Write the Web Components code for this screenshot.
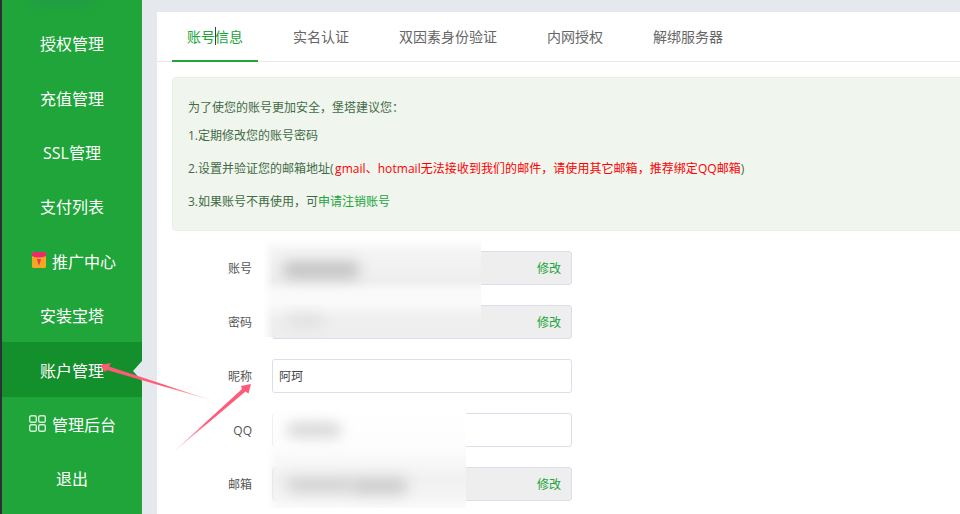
<!DOCTYPE html>
<html lang="zh">
<head>
<meta charset="utf-8">
<title>账户管理</title>
<style>
    html, body { margin: 0; height: 100%; overflow: hidden; background: #e5e8ed; }
    body { font-family: "Open Sans", "Noto Sans CJK SC", sans-serif; }
    svg { display: block; }
</style>
</head>
<body>
<app-shell>
    <side-menu slot="menu">
        <menu-item>授权管理</menu-item>
        <menu-item>充值管理</menu-item>
        <menu-item>SSL管理</menu-item>
        <menu-item>支付列表</menu-item>
        <menu-item shift="4">
            <svg slot="icon" width="14" height="16" viewBox="0 1 14 16" style="margin-top:-2px">
                <rect x="0" y="1" width="14" height="16" rx="1.5" fill="#f5a623"/>
                <path d="M0 2.500A1.500 1.500 0 0 1 1.500 1h11A1.500 1.500 0 0 1 14 2.500V5Q7 8 0 5z" fill="#ea2a6b"/>
                <path d="M5 8h4L8 12 7 14.500 6 12z" fill="#e8385f"/>
            </svg>
            推广中心
        </menu-item>
        <menu-item>安装宝塔</menu-item>
        <menu-item active>账户管理</menu-item>
        <menu-item shift="1">
            <svg slot="icon" width="17" height="17" viewBox="0 0 17 17" fill="none" stroke="#d8f0dc" stroke-width="1.4">
                <rect x="0.7" y="0.7" width="6.6" height="6.6" rx="1.6"/>
                <rect x="9.7" y="0.7" width="6.6" height="6.6" rx="1.6"/>
                <rect x="0.7" y="9.7" width="6.6" height="6.6" rx="1.6"/>
                <rect x="9.7" y="9.7" width="6.6" height="6.6" rx="1.6"/>
            </svg>
            管理后台
        </menu-item>
        <menu-item>退出</menu-item>
    </side-menu>

    <content-card>
        <tab-bar>
            <tab-item active>账号信息</tab-item>
            <tab-item>实名认证</tab-item>
            <tab-item>双因素身份验证</tab-item>
            <tab-item>内网授权</tab-item>
            <tab-item>解绑服务器</tab-item>
        </tab-bar>

        <notice-box>
            <p>为了使您的账号更加安全，堡塔建议您：</p>
            <p>1.定期修改您的账号密码</p>
            <p class="gap">2.设置并验证您的邮箱地址(<span class="red">gmail、hotmail无法接收到我们的邮件，请使用其它邮箱，推荐绑定QQ邮箱</span>)</p>
            <p class="gap">3.如果账号不再使用，可<span class="link">申请注销账号</span></p>
        </notice-box>

        <form-row label="账号" action="修改" disabled></form-row>
        <form-row label="密码" action="修改" disabled></form-row>
        <form-row label="昵称">阿珂</form-row>
        <form-row label="QQ"></form-row>
        <form-row label="邮箱" action="修改" disabled></form-row>
    </content-card>

    <mark-up></mark-up>
</app-shell>

<script>
class AppShell extends HTMLElement {
    constructor() {
        super();
        this.attachShadow({ mode: 'open' });
        this.shadowRoot.innerHTML = `
            <style>
                :host {
                    display: flex;
                    position: relative;
                    width: 960px;
                    height: 514px;
                    overflow: hidden;
                    background: #e5e8ed;
                }
            </style>
            <slot name="menu"></slot>
            <slot></slot>
        `;
    }
}

class SideMenu extends HTMLElement {
    constructor() {
        super();
        this.attachShadow({ mode: 'open' });
        this.shadowRoot.innerHTML = `
            <style>
                :host {
                    display: block;
                    flex: none;
                    box-sizing: border-box;
                    width: 142px;
                    height: 514px;
                    padding-top: 16px;
                    background: #20a53a;
                    border-left: 2px solid #2e2f36;
                }
            </style>
            <slot></slot>
        `;
    }
}

class MenuItem extends HTMLElement {
    constructor() {
        super();
        this.attachShadow({ mode: 'open' });
        this.shadowRoot.innerHTML = `
            <style>
                :host {
                    display: flex;
                    position: relative;
                    box-sizing: border-box;
                    align-items: center;
                    justify-content: center;
                    gap: 6px;
                    height: 54.4px;
                    color: #fff;
                    font-size: 16px;
                }
                :host([active]) { background: #138f2b; }
                :host([active])::after {
                    content: "";
                    position: absolute;
                    right: 0;
                    top: 19px;
                    border: 10px solid transparent;
                    border-left-width: 0;
                    border-right: 9px solid #e5e8ed;
                }
            </style>
            <slot name="icon"></slot>
            <slot></slot>
        `;
        if (this.hasAttribute('shift')) {
            this.style.paddingLeft = this.getAttribute('shift') + 'px';
        }
    }
}

class ContentCard extends HTMLElement {
    constructor() {
        super();
        this.attachShadow({ mode: 'open' });
        this.shadowRoot.innerHTML = `
            <style>
                :host {
                    display: block;
                    flex: none;
                    width: 860px;
                    height: 600px;
                    margin: 12px 0 0 15px;
                    background: #fff;
                }
            </style>
            <slot></slot>
        `;
    }
}

class TabBar extends HTMLElement {
    constructor() {
        super();
        this.attachShadow({ mode: 'open' });
        this.shadowRoot.innerHTML = `
            <style>
                :host {
                    display: flex;
                    box-sizing: border-box;
                    height: 50px;
                    padding-left: 15px;
                    gap: 20px;
                    border-bottom: 1px solid #e6e6e6;
                }
            </style>
            <slot></slot>
        `;
    }
}

class TabItem extends HTMLElement {
    constructor() {
        super();
        this.attachShadow({ mode: 'open' });
        this.shadowRoot.innerHTML = `
            <style>
                :host {
                    display: block;
                    position: relative;
                    box-sizing: border-box;
                    height: 50px;
                    padding: 0 15px;
                    line-height: 49px;
                    font-size: 14px;
                    color: #666;
                }
                :host([active]) {
                    color: #20a53a;
                    border-bottom: 2px solid #20a53a;
                }
                /* text caret caught in the shot */
                :host([active])::after {
                    content: "";
                    position: absolute;
                    left: 43px;
                    top: 15px;
                    width: 1px;
                    height: 18px;
                    background: #2d4a35;
                }
            </style>
            <slot></slot>
        `;
    }
}

class NoticeBox extends HTMLElement {
    constructor() {
        super();
        this.attachShadow({ mode: 'open' });
        this.shadowRoot.innerHTML = `
            <style>
                :host {
                    display: block;
                    box-sizing: border-box;
                    width: 830px;
                    height: 154px;
                    margin: 15px 0 20px 15px;
                    padding: 16px 15px 14px;
                    background: #f0f5ee;
                    border: 1px solid #e9efe6;
                    border-radius: 4px;
                    color: #3f6b45;
                    font-size: 12px;
                    line-height: 28px;
                }
                ::slotted(p) { margin: 0; white-space: nowrap; }
                ::slotted(p.gap) { margin-top: 5px; }
            </style>
            <slot></slot>
        `;
    }
    connectedCallback() {
        // spans are light DOM, ::slotted cannot reach them
        this.querySelectorAll('.red').forEach(el => {
            el.style.color = '#f00';
            el.style.marginLeft = '1.5px';
            el.style.letterSpacing = '0.05px';
        });
        this.querySelectorAll('.link').forEach(el => { el.style.color = '#20a53a'; });
    }
}

class FormRow extends HTMLElement {
    constructor() {
        super();
        this.attachShadow({ mode: 'open' });
        const action = this.getAttribute('action');
        this.shadowRoot.innerHTML = `
            <style>
                :host {
                    display: flex;
                    align-items: center;
                    height: 34px;
                    margin: 0 0 20px 15px;
                    font-size: 12px;
                    color: #555;
                }
                .label {
                    width: 80px;
                    margin-right: 20px;
                    text-align: right;
                }
                .field {
                    display: flex;
                    align-items: center;
                    justify-content: space-between;
                    box-sizing: border-box;
                    width: 300px;
                    height: 34px;
                    padding: 0 10px 0 6px;
                    background: #fff;
                    border: 1px solid #dcdcea;
                    border-radius: 3px;
                    color: #444;
                }
                :host([disabled]) .field { background: #eee; }
                .action { color: #20a53a; }
            </style>
            <span class="label">${this.getAttribute('label')}</span>
            <div class="field">
                <span><slot></slot></span>
                ${action ? `<span class="action">${action}</span>` : ''}
            </div>
        `;
    }
}

// blurred patches and the two hand drawn arrows, they lie over everything else
class MarkUp extends HTMLElement {
    constructor() {
        super();
        this.attachShadow({ mode: 'open' });
        this.shadowRoot.innerHTML = `
            <style>
                :host {
                    position: absolute;
                    inset: 0;
                    pointer-events: none;
                }
                .patch {
                    position: absolute;
                    overflow: hidden;
                    -webkit-mask-image: linear-gradient(90deg, transparent, #000 10px);
                    mask-image: linear-gradient(90deg, transparent, #000 10px);
                }
                .blob { position: absolute; filter: blur(7px); border-radius: 6px; }
                svg { position: absolute; left: 0; top: 0; }
            </style>
            <div class="blob" style="left:30px;top:-8px;width:65px;height:10px;background:#238f5a;opacity:.7"></div>
            <div class="patch" style="left:263px;top:239px;width:218px;height:98px;background:linear-gradient(#fff,#f4f4f4 12px,#eee 42px,#f9f9f9 52px,#fafafa 64px,#efefef 80px,#eee)">
                <div class="blob" style="left:20px;top:23px;width:76px;height:16px;background:#c0c0c0"></div>
                <div class="blob" style="left:24px;top:77px;width:36px;height:10px;background:#dcdcdc"></div>
            </div>
            <div class="patch" style="left:267px;top:410px;width:199px;height:98px;background:linear-gradient(#fff,#fdfdfd 37px,#f8f8f8 50px,#f1f1f1 68px,#f4f4f4 85px,#fafafa)">
                <div class="blob" style="left:20px;top:13px;width:54px;height:14px;background:#d4d4d4"></div>
                <div class="blob" style="left:20px;top:68px;width:66px;height:14px;background:#cfcfcf"></div>
                <div class="blob" style="left:84px;top:68px;width:56px;height:16px;background:#cbcbcb"></div>
            </div>
            <svg width="960" height="514" viewBox="0 0 960 514">
                <defs>
                    <linearGradient id="a1" gradientUnits="userSpaceOnUse" x1="217" y1="402" x2="100" y2="365">
                        <stop offset="0" stop-color="#ff5b78" stop-opacity="0"/>
                        <stop offset="0.45" stop-color="#ff5b78"/>
                    </linearGradient>
                    <linearGradient id="a2" gradientUnits="userSpaceOnUse" x1="170" y1="455" x2="251" y2="384">
                        <stop offset="0" stop-color="#ff5b78" stop-opacity="0"/>
                        <stop offset="0.45" stop-color="#ff5b78"/>
                    </linearGradient>
                </defs>
                <path d="M100 365L111 363 109 366.500 217 402 107 370 105 372z" fill="url(#a1)"/>
                <path d="M251 384L248.500 393.500 245.500 391.500 170 455 242 389 241 386z" fill="url(#a2)"/>
            </svg>
        `;
    }
}

customElements.define('app-shell', AppShell);
customElements.define('side-menu', SideMenu);
customElements.define('menu-item', MenuItem);
customElements.define('content-card', ContentCard);
customElements.define('tab-bar', TabBar);
customElements.define('tab-item', TabItem);
customElements.define('notice-box', NoticeBox);
customElements.define('form-row', FormRow);
customElements.define('mark-up', MarkUp);
</script>
</body>
</html>
